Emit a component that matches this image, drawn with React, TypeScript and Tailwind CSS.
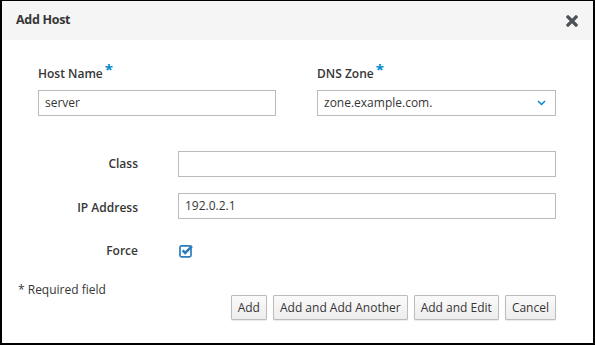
import React from 'react';

const font = { fontFamily: '"Open Sans", "Noto Sans", sans-serif' };

function Req() {
  return <span className="ml-[2px] text-[15px] leading-none font-bold text-[#0088ce] relative top-[-3px]">*</span>;
}

function Btn({ label }: { label: string }) {
  return (
    <button className="h-[25px] px-[6px] text-[12px] text-[#363636] border border-[#bbbbbb] rounded-[1px] bg-gradient-to-b from-[#fafafa] to-[#ededed] shadow-[0_1px_1px_rgba(3,3,3,0.08)]">
      {label}
    </button>
  );
}

export default function App() {
  return (
    <div style={font} className="w-[595px] h-[345px] bg-white border-x-2 border-b-2 border-t border-black text-[#363636] flex flex-col">
      {/* Header */}
      <div className="h-[39px] shrink-0 bg-[#f5f5f5] flex items-center justify-between pl-[14px] pr-[15px]">
        <h4 className="text-[12.5px] font-bold tracking-[-0.3px] text-[#363636]">Add Host</h4>
        <svg width="12" height="12" viewBox="0 0 12 12" className="mt-[1px]">
          <path d="M2 2 L10 10 M10 2 L2 10" stroke="#4d5258" strokeWidth="3.2" strokeLinecap="square" />
        </svg>
      </div>

      <div className="flex-1 pl-[16px] pr-[37px] pt-[24px]">
        {/* Top row */}
        <div className="flex gap-[41px] pl-[20px]">
          <div className="w-[238px]">
            <label className="block h-[20px] text-[12px] font-semibold leading-[20px]">Host Name<Req /></label>
            <div className="mt-[6px] h-[26px] border border-[#bbbbbb] flex items-center px-[6px] text-[12px]">server</div>
          </div>
          <div className="w-[239px]">
            <label className="block h-[20px] text-[12px] font-semibold leading-[20px]">DNS Zone<Req /></label>
            <div className="mt-[6px] h-[26px] border border-[#bbbbbb] flex items-center justify-between pl-[6px] pr-[9px] text-[12px]">
              <span>zone.example.com.</span>
              <svg width="9" height="6" viewBox="0 0 9 6">
                <path d="M1 1 L4.5 4.5 L8 1" fill="none" stroke="#0088ce" strokeWidth="1.5" />
              </svg>
            </div>
          </div>
        </div>

        {/* Horizontal rows */}
        <div className="mt-[35px] flex flex-col gap-[16px]">
          <div className="flex items-center h-[26px]">
            <label className="w-[120px] text-right text-[12px] font-semibold">Class</label>
            <div className="ml-[40px] flex-1 h-[26px] border border-[#bbbbbb]" />
          </div>
          <div className="flex items-center h-[26px]">
            <label className="w-[120px] text-right text-[12px] font-semibold pt-[3px]">IP Address</label>
            <div className="ml-[40px] flex-1 h-[26px] border border-[#bbbbbb] flex items-center px-[6px] text-[12px]">192.0.2.1</div>
          </div>
          <div className="flex items-center h-[26px] mt-[1px]">
            <label className="w-[120px] text-right text-[12px] font-semibold pt-[4px]">Force</label>
            <div className="ml-[41px] pt-[2px]">
              <svg width="15" height="15" viewBox="0 0 15 15">
                <rect x="1" y="2.8" width="11" height="11" rx="1.5" fill="none" stroke="#2b7cbd" strokeWidth="1.7" />
                <path d="M3.6 7.4 L6.2 10 L13 3.2" fill="none" stroke="#2b7cbd" strokeWidth="2.5" />
              </svg>
            </div>
          </div>
        </div>

        {/* Footer */}
        <div className="mt-[19px] text-[12px] leading-[18px]">* Required field</div>
        <div className="mt-[-4px] flex justify-end gap-[6px]">
          <Btn label="Add" />
          <Btn label="Add and Add Another" />
          <Btn label="Add and Edit" />
          <Btn label="Cancel" />
        </div>
      </div>
    </div>
  );
}
